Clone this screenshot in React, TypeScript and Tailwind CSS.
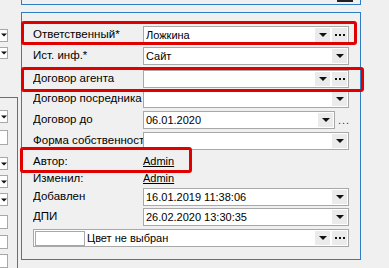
import React from 'react';

const BLUE = 'border-[#2f7dc4]';

function Arrow() {
  return (
    <svg width="8" height="4" viewBox="0 0 8 4">
      <path d="M0 0h8L4 4z" fill="#111" />
    </svg>
  );
}

function Dots() {
  return (
    <svg width="10" height="2" viewBox="0 0 10 2">
      <rect x="0" y="0" width="2" height="2" fill="#111" />
      <rect x="4" y="0" width="2" height="2" fill="#111" />
      <rect x="8" y="0" width="2" height="2" fill="#111" />
    </svg>
  );
}

function Btn({ children }: { children: React.ReactNode }) {
  return (
    <span className="w-[15px] h-[14px] bg-[#ebebeb] flex items-center justify-center shrink-0">
      {children}
    </span>
  );
}

interface FieldProps {
  value?: string;
  arrow?: boolean;
  dots?: boolean;
  width?: string;
}

function Field({ value = '', arrow, dots, width = 'w-[206px]' }: FieldProps) {
  return (
    <div className={`${width} h-[18px] bg-white border border-[#a8a8a8] flex items-center pl-[2px] pr-[1px] gap-[2px] shrink-0`}>
      <span className="flex-1 truncate leading-none">{value}</span>
      {arrow && <Btn><Arrow /></Btn>}
      {dots && <Btn><Dots /></Btn>}
    </div>
  );
}

function Row({ label, className = '', children }: { label: string; className?: string; children: React.ReactNode }) {
  return (
    <div className={`flex items-center h-[18px] ${className}`}>
      <span className="w-[110px] shrink-0 whitespace-nowrap overflow-hidden text-[11.5px]">{label}</span>
      {children}
    </div>
  );
}

function LinkRow({ label }: { label: string }) {
  return (
    <div className="flex items-center h-[17px]">
      <span className="w-[110px] shrink-0 text-[11.5px]">{label}</span>
      <span className="underline">Admin</span>
    </div>
  );
}

function SideBox({ arrow, h = 'h-[13px]', className = '' }: { arrow?: boolean; h?: string; className?: string }) {
  return (
    <div className={`w-[8px] ${h} bg-white border border-l-0 border-[#a8a8a8] flex items-center justify-start pl-[1px] ${className}`}>
      {arrow && <Arrow />}
    </div>
  );
}

export default function App() {
  return (
    <div className="relative w-[389px] h-[268px] overflow-hidden bg-[#f0f0f0] flex font-['Liberation_Sans',Arial,sans-serif] text-[11px] text-black">
      {/* left strip */}
      <div className="w-[18px] shrink-0 flex flex-col">
        <SideBox arrow h="h-[14px]" className="mt-[29px]" />
        <SideBox arrow h="h-[14px]" className="mt-[5px]" />
        <div className={`mt-[38px] flex-1 border-t border-r ${BLUE} flex flex-col`}>
          <SideBox arrow className="mt-[12px]" />
          <SideBox h="h-[15px]" className="mt-[7px]" />
          <SideBox arrow className="mt-[12px]" />
          <SideBox arrow className="mt-[5px]" />
          <SideBox arrow className="mt-[5px]" />
          <SideBox h="h-[14px]" className="mt-[9px]" />
          <SideBox h="h-[14px]" className="mt-[6px]" />
          <SideBox h="h-[14px]" className="mt-[5px]" />
        </div>
      </div>

      {/* main column */}
      <div className="ml-[3px] w-[340px] shrink-0 flex flex-col">
        <div className={`h-[5px] border-x border-b ${BLUE}`}>
          <div className="ml-[315px] w-[16px] h-[2px] bg-[#222]" />
        </div>

        <div className={`mt-[7px] border ${BLUE} pt-[13px] pb-[12px] pl-[11px] flex flex-col`}>
          <Row label="Ответственный*">
            <Field value="Ложкина" arrow dots />
          </Row>
          <Row label="Ист. инф.*" className="mt-[3px]">
            <Field value="Сайт" arrow />
          </Row>
          <Row label="Договор агента" className="mt-[5px]">
            <Field arrow dots />
          </Row>
          <Row label="Договор посредника" className="mt-[2px]">
            <Field arrow />
          </Row>
          <Row label="Договор до" className="mt-[3px]">
            <Field value="06.01.2020" arrow width="w-[192px]" />
            <span className="ml-[3px] self-end mb-[3px] text-[#333] leading-none tracking-[1px]">...</span>
          </Row>
          <Row label="Форма собственности" className="mt-[3px]">
            <Field arrow />
          </Row>
          <div className="mt-[3px]">
            <LinkRow label="Автор:" />
            <LinkRow label="Изменил:" />
          </div>
          <Row label="Добавлен" className="mt-[1px]">
            <Field value="16.01.2019 11:38:06" arrow />
          </Row>
          <Row label="ДПИ" className="mt-[2px]">
            <Field value="26.02.2020 13:30:35" arrow />
          </Row>
          <div className="mt-[3px] w-[316px] h-[18px] bg-white border border-[#a8a8a8] flex items-center pl-[1px] pr-[1px] gap-[2px]">
            <span className="w-[50px] h-[15px] bg-white border border-[#a8a8a8] shrink-0" />
            <span className="flex-1 truncate leading-none">Цвет не выбран</span>
            <Btn><Arrow /></Btn>
            <Btn><Dots /></Btn>
          </div>
        </div>
      </div>

      {/* red highlight overlays */}
      <div className="absolute left-[21px] top-[21px] w-[336px] h-[24px] border-[3px] border-[#e10000] rounded-[3px]" />
      <div className="absolute left-[21px] top-[67px] w-[343px] h-[25px] border-[3px] border-[#e10000] rounded-[3px]" />
      <div className="absolute left-[20px] top-[147px] w-[172px] h-[26px] border-[3px] border-[#e10000] rounded-[3px]" />
    </div>
  );
}
